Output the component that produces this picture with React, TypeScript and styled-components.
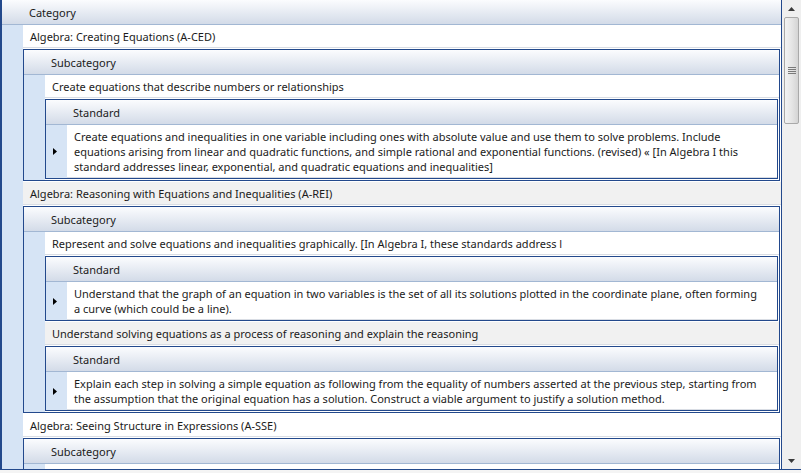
import styled, { createGlobalStyle } from 'styled-components';

const GlobalStyle = createGlobalStyle`
  html, body {
    margin: 0;
    padding: 0;
    background: #f4f4f4;
  }
  body {
    font-family: "Noto Sans", "Liberation Sans", Arial, sans-serif;
    font-size: 11px;
    color: #1b1b1b;
  }
`;

const DARK = '#23498c';

const Frame = styled.div`
  width: 801px;
  height: 470px;
  box-sizing: border-box;
  display: flex;
  border-left: 2px solid ${DARK};
  border-bottom: 1px solid ${DARK};
  background: #fff;
  overflow: hidden;
`;

const GridArea = styled.div`
  flex: 1;
  min-width: 0;
  overflow: hidden;
`;

const Grid = styled.div`
  display: flex;
  flex-direction: column;
`;

const HeaderRow = styled.div`
  height: 25px;
  flex: none;
  box-sizing: border-box;
  display: flex;
  align-items: center;
  padding: 1px 0 0 27px;
  background: linear-gradient(#fbfcfe, #d3dbe8);
  border-bottom: 1px solid #a2b7d3;
`;

const Row = styled.div`
  display: flex;
  background: #fff;
`;

const Indicator = styled.div`
  width: 21px;
  flex: none;
  display: flex;
  align-items: center;
  padding-left: 7px;
  box-sizing: border-box;
  background: #d6e4f5;
`;

const Cell = styled.div<{ $alt?: boolean; $lines?: number }>`
  flex: 1;
  min-width: 0;
  height: ${(p) => (p.$lines ?? 1) * 15 + 7}px;
  padding: 0 7px;
  display: flex;
  flex-direction: column;
  justify-content: center;
  line-height: 15px;
  white-space: nowrap;
  overflow: hidden;
  background: ${(p) => (p.$alt ? '#f1f1f1' : '#fff')};
  border-bottom: 1px solid #d9dde4;
`;

const Line = styled.div``;

const DetailBox = styled.div`
  flex: 1;
  min-width: 0;
  margin: 1px 1px 1px 0;
  border: 1px solid ${DARK};
`;

const ScrollBar = styled.div`
  width: 19px;
  flex: none;
  border-left: 1px solid ${DARK};
  background: #efefef;
  display: flex;
  flex-direction: column;
  align-items: center;
`;

const ScrollArrow = styled.div`
  height: 17px;
  flex: none;
  display: flex;
  align-items: center;
  justify-content: center;
`;

const Track = styled.div`
  flex: 1;
`;

const Thumb = styled.div`
  width: 15px;
  height: 107px;
  box-sizing: border-box;
  border: 1px solid #a9a9a9;
  border-radius: 2px;
  background: linear-gradient(90deg, #f3f3f3, #e4e4e4 55%, #d4d4d4);
  display: flex;
  align-items: center;
  justify-content: center;
`;

type Subcategory = { name: string; standards: string[][] };
type Category = { name: string; subs: Subcategory[] };

const data: Category[] = [
  {
    name: 'Algebra: Creating Equations (A-CED)',
    subs: [
      {
        name: 'Create equations that describe numbers or relationships',
        standards: [
          [
            'Create equations and inequalities in one variable including ones with absolute value and use them to solve problems. Include',
            'equations arising from linear and quadratic functions, and simple rational and exponential functions. (revised) \u00ab [In Algebra I this',
            'standard addresses linear, exponential, and quadratic equations and inequalities]',
          ],
        ],
      },
    ],
  },
  {
    name: 'Algebra: Reasoning with Equations and Inequalities (A-REI)',
    subs: [
      {
        name: 'Represent and solve equations and inequalities graphically. [In Algebra I, these standards address l',
        standards: [
          [
            'Understand that the graph of an equation in two variables is the set of all its solutions plotted in the coordinate plane, often forming',
            'a curve (which could be a line).',
          ],
        ],
      },
      {
        name: 'Understand solving equations as a process of reasoning and explain the reasoning',
        standards: [
          [
            'Explain each step in solving a simple equation as following from the equality of numbers asserted at the previous step, starting from',
            'the assumption that the original equation has a solution. Construct a viable argument to justify a solution method.',
          ],
        ],
      },
    ],
  },
  {
    name: 'Algebra: Seeing Structure in Expressions (A-SSE)',
    subs: [
      {
        name: '',
        standards: [],
      },
    ],
  },
];

const RowArrow = () => (
  <svg width="4" height="7" viewBox="0 0 4 7">
    <path d="M0 0L4 3.5L0 7Z" fill="#000" />
  </svg>
);

const StandardGrid = ({ standards }: { standards: string[][] }) => (
  <Grid>
    <HeaderRow>Standard</HeaderRow>
    {standards.map((lines, i) => (
      <Row key={i}>
        <Indicator>{i === 0 && <RowArrow />}</Indicator>
        <Cell $alt={i % 2 === 1} $lines={lines.length}>
          {lines.map((l, j) => (
            <Line key={j}>{l}</Line>
          ))}
        </Cell>
      </Row>
    ))}
  </Grid>
);

const SubcategoryGrid = ({ subs }: { subs: Subcategory[] }) => (
  <Grid>
    <HeaderRow>Subcategory</HeaderRow>
    {subs.map((s, i) => (
      <div key={i}>
        <Row>
          <Indicator />
          <Cell $alt={i % 2 === 1}>{s.name}</Cell>
        </Row>
        {s.standards.length > 0 && (
          <Row>
            <Indicator />
            <DetailBox>
              <StandardGrid standards={s.standards} />
            </DetailBox>
          </Row>
        )}
      </div>
    ))}
  </Grid>
);

const App = () => (
  <>
    <GlobalStyle />
    <Frame>
      <GridArea>
        <Grid>
          <HeaderRow>Category</HeaderRow>
          {data.map((c, i) => (
            <div key={i}>
              <Row>
                <Indicator />
                <Cell $alt={i % 2 === 1}>{c.name}</Cell>
              </Row>
              <Row>
                <Indicator />
                <DetailBox>
                  <SubcategoryGrid subs={c.subs} />
                </DetailBox>
              </Row>
            </div>
          ))}
        </Grid>
      </GridArea>
      <ScrollBar>
        <ScrollArrow>
          <svg width="7" height="4" viewBox="0 0 7 4">
            <path d="M0 4L3.5 0L7 4Z" fill="#3a3a3a" />
          </svg>
        </ScrollArrow>
        <Thumb>
          <svg width="8" height="8" viewBox="0 0 8 8">
            <path d="M0 0.5H8M0 2.5H8M0 4.5H8M0 6.5H8" stroke="#7a7a7a" strokeWidth="1" />
          </svg>
        </Thumb>
        <Track />
        <ScrollArrow>
          <svg width="7" height="4" viewBox="0 0 7 4">
            <path d="M0 0L7 0L3.5 4Z" fill="#3a3a3a" />
          </svg>
        </ScrollArrow>
      </ScrollBar>
    </Frame>
  </>
);

export default App;
